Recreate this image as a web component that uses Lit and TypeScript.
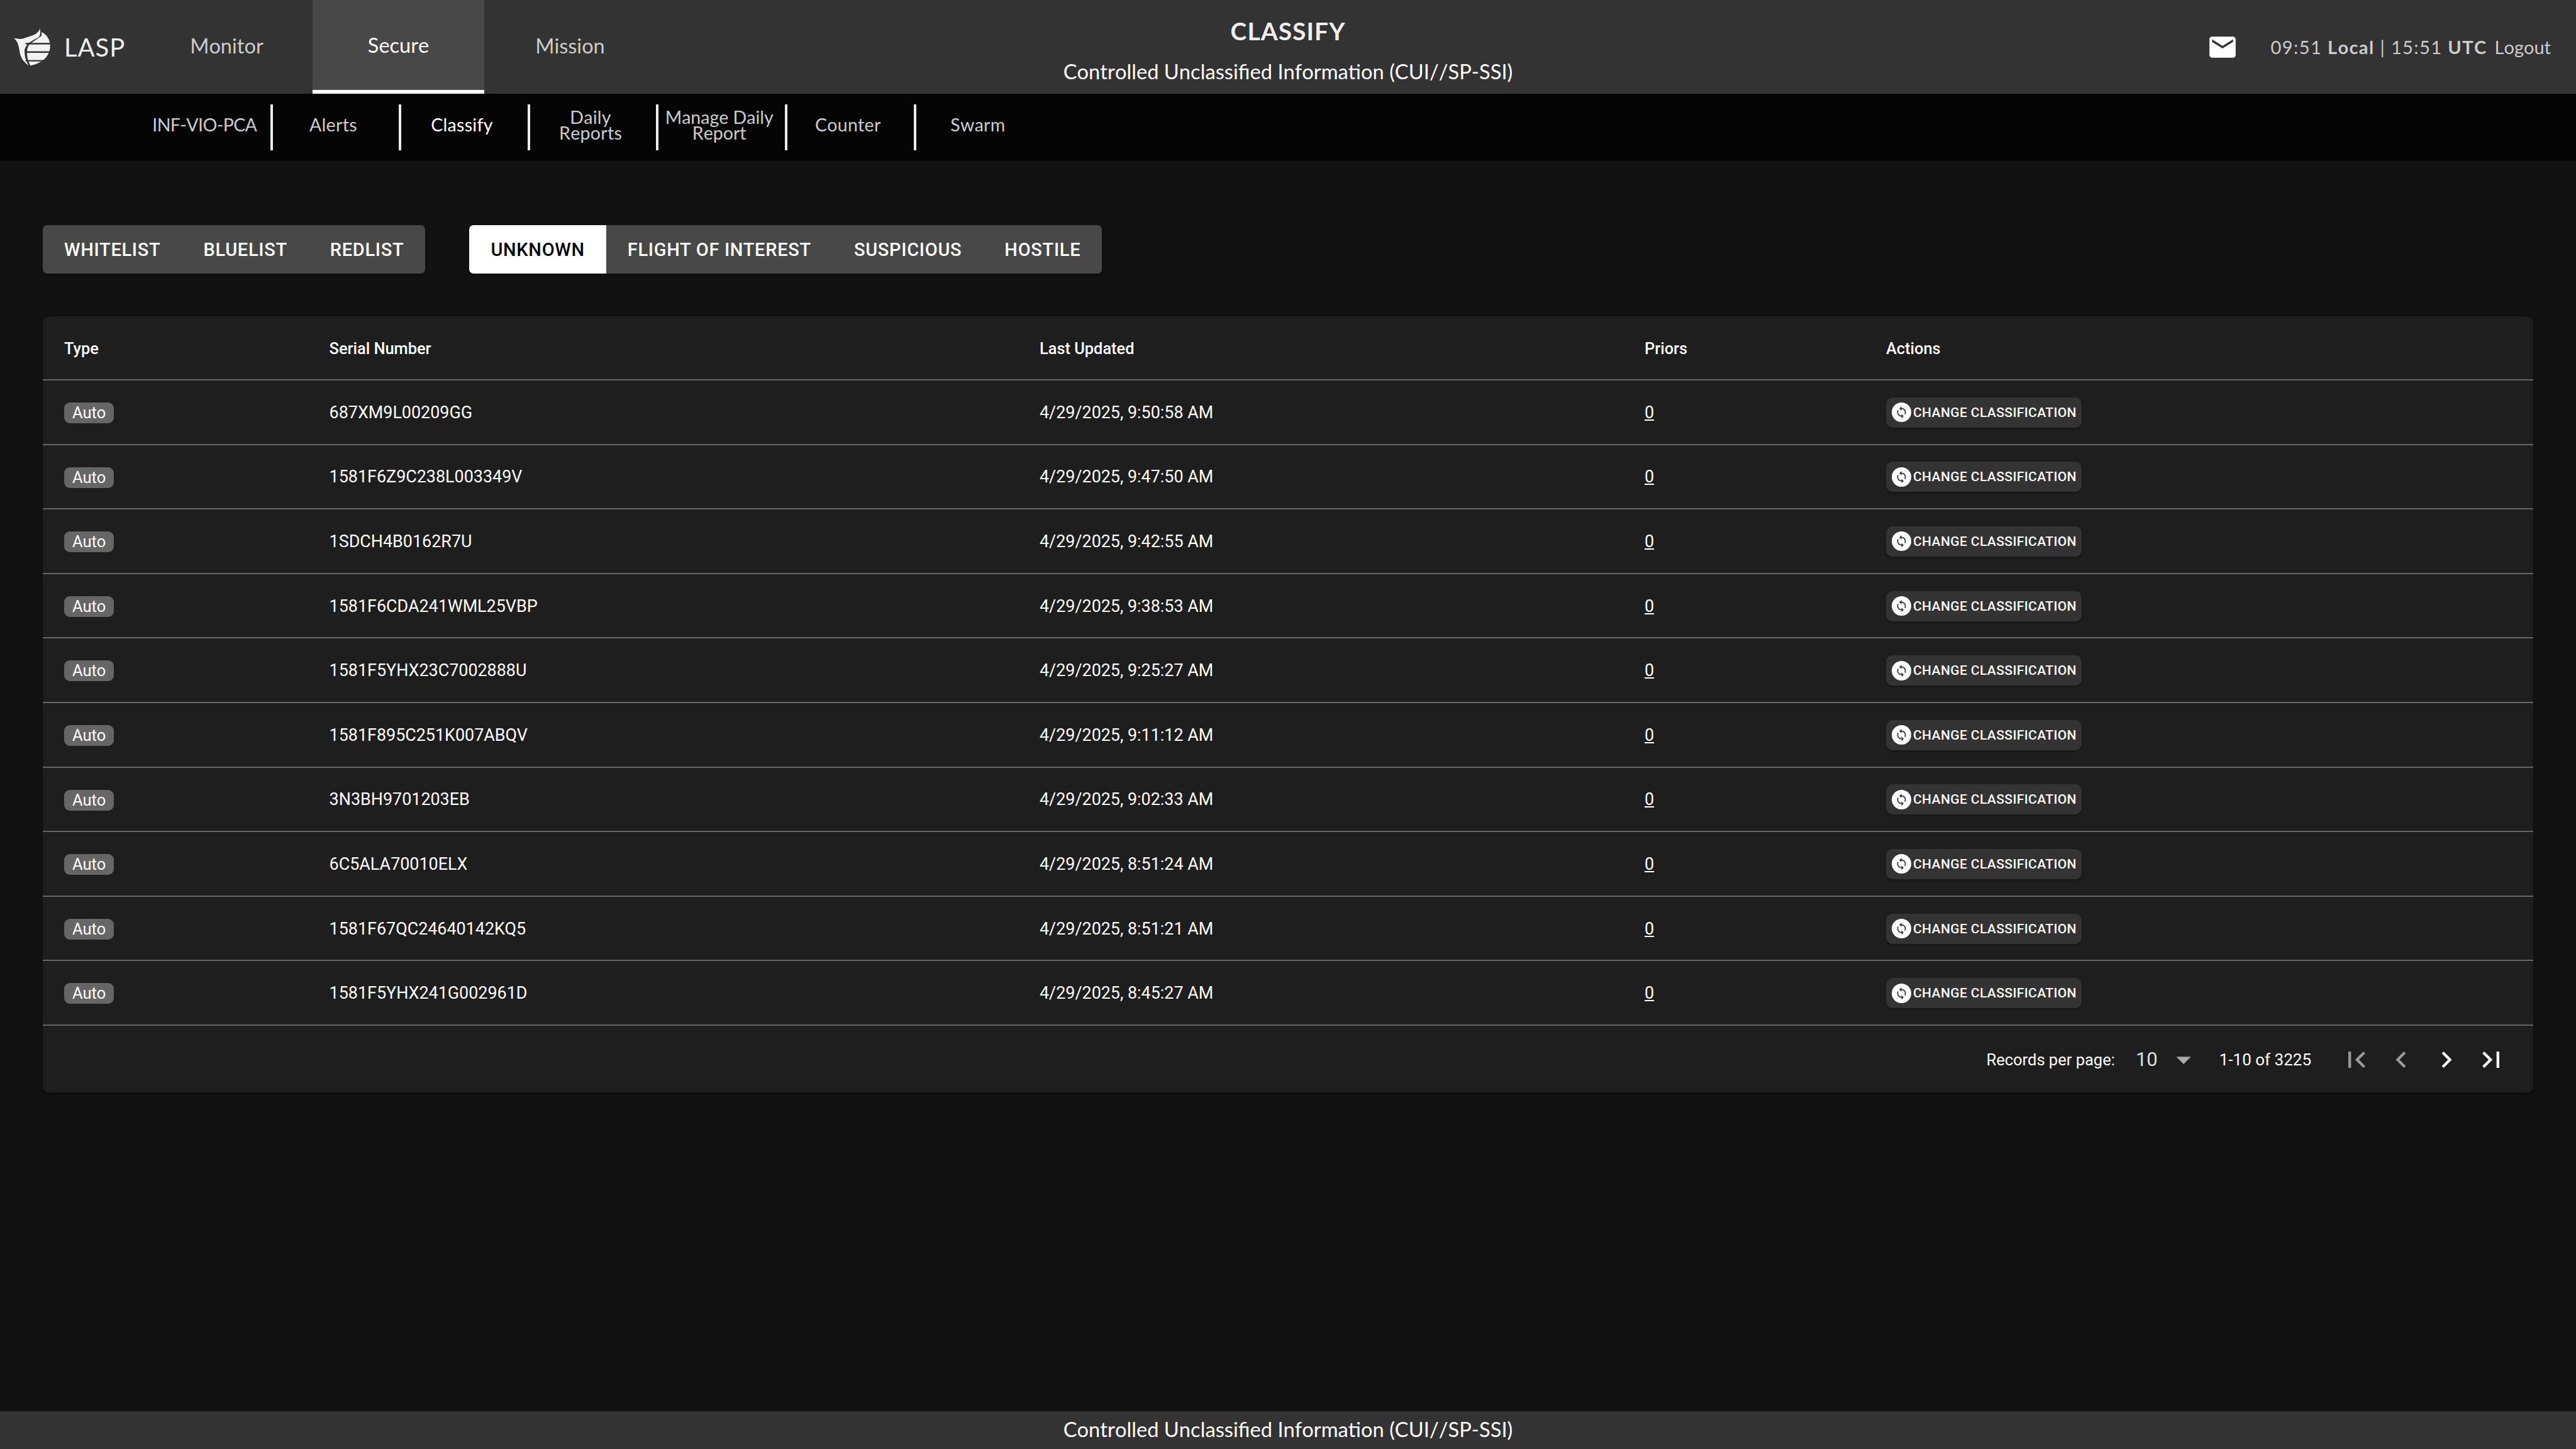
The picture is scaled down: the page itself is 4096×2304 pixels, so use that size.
import { LitElement, html, css, svg } from "lit";
import { customElement } from "lit/decorators.js";

const ROWS = [
  ["687XM9L00209GG", "4/29/2025, 9:50:58 AM"],
  ["1581F6Z9C238L003349V", "4/29/2025, 9:47:50 AM"],
  ["1SDCH4B0162R7U", "4/29/2025, 9:42:55 AM"],
  ["1581F6CDA241WML25VBP", "4/29/2025, 9:38:53 AM"],
  ["1581F5YHX23C7002888U", "4/29/2025, 9:25:27 AM"],
  ["1581F895C251K007ABQV", "4/29/2025, 9:11:12 AM"],
  ["3N3BH9701203EB", "4/29/2025, 9:02:33 AM"],
  ["6C5ALA70010ELX", "4/29/2025, 8:51:24 AM"],
  ["1581F67QC24640142KQ5", "4/29/2025, 8:51:21 AM"],
  ["1581F5YHX241G002961D", "4/29/2025, 8:45:27 AM"],
];

const icon = (d: string, cls: string) =>
  html`<svg class=${cls} viewBox="0 0 24 24"><path d=${d}></path></svg>`;

const SYNC =
  "M12,18A6,6 0 0,1 6,12C6,11 6.25,10.03 6.7,9.2L5.24,7.74C4.46,8.97 4,10.43 4,12A8,8 0 0,0 12,20V23L16,19L12,15M12,4V1L8,5L12,9V6A6,6 0 0,1 18,12C18,13 17.75,13.97 17.3,14.8L18.76,16.26C19.54,15.03 20,13.57 20,12A8,8 0 0,0 12,4Z";

@customElement("app-root")
export class AppRoot extends LitElement {
  static styles = css`
    :host {
      display: flex;
      flex-direction: column;
      min-height: 2304px;
      background: #121212;
      color: #fff;
      font-family: Roboto, "Liberation Sans", sans-serif;
    }
    .top {
      height: 149px;
      background: #333;
      display: grid;
      grid-template-columns: 1fr auto 1fr;
      font-family: Lato, "Noto Sans", sans-serif;
      font-kerning: none;
    }
    .left { display: flex; }
    .brand { width: 224px; display: flex; align-items: center; padding-left: 20px; box-sizing: border-box; gap: 20px; font-size: 40px; letter-spacing: 1px; color: #eee; }
    .logo { width: 62px; height: 62px; }
    .tab {
      width: 273px; display: flex; align-items: center; justify-content: center;
      font-size: 32.5px; color: #ccc; box-sizing: border-box; padding-bottom: 4px;
    }
    .tab.on { background: #484848; color: #fff; border-bottom: 6px solid #fff; padding-bottom: 0; }
    .center { text-align: center; display: flex; flex-direction: column; align-items: center; }
    .title { font-size: 39px; font-weight: 700; letter-spacing: 1px; color: #eee; line-height: 50px; margin-top: 24px; }
    .cui { font-size: 32.7px; line-height: 44px; margin-top: 18px; }
    .right { display: flex; align-items: center; justify-content: flex-end; padding-right: 40px; font-size: 29px; color: #ccc; }
    .mail { width: 50px; height: 50px; fill: #fff; margin-right: 52px; }
    .clock { letter-spacing: 1.4px; }
    .clock b { font-weight: 700; }
    .logout { margin-left: 12px; }
    .sub {
      height: 107px; box-sizing: border-box; background: #050505;
      display: flex; padding: 17px 0 17px 229px;
      font-family: Lato, "Noto Sans", sans-serif;
      font-kerning: none;
    }
    .si {
      width: 204.6px; box-sizing: border-box; display: flex; align-items: center; justify-content: center;
      text-align: center; font-size: 28.5px; letter-spacing: .3px; line-height: 25px; color: #ccc; border-right: 4px solid #eee;
      padding: 0 8px 8px 0;
    }
    .si:last-child { border-right: none; }
    .si.on { color: #fff; }
    .si.tight { letter-spacing: -.6px; }
    .si.snug { letter-spacing: 0; }
    .main { flex: 1; padding: 102px 68px 0; box-sizing: border-box; }
    .groups { display: flex; gap: 70px; margin-bottom: 68px; }
    .group { display: flex; height: 77px; background: #484848; border-radius: 7px; overflow: hidden; box-shadow: 0 3px 4px rgba(0,0,0,.3); }
    .gb { display: flex; align-items: center; padding: 0 34px; font-size: 29px; font-weight: 500; letter-spacing: .7px; color: #fff; }
    .gb.on { background: #fff; color: #000; }
    .table { background: #1e1e1e; border-radius: 10px; height: 1234px; box-shadow: 0 3px 4px rgba(0,0,0,.3); }
    .row {
      display: grid; grid-template-columns: 421.6px 1129.4px 962px 384px 1fr;
      height: 102.6px; box-sizing: border-box; border-bottom: 2px solid #666; align-items: center;
      font-size: 26.9px;
    }
    .row.head { height: 102px; font-weight: 500; font-size: 25.4px; }
    .row > div { padding-left: 34px; padding-top: 1px; }
    .chip { display: inline-block; background: #666; border-radius: 9px; height: 33px; line-height: 33px; padding: 0 13px; font-size: 25.5px; vertical-align: middle; }
    .u { text-decoration: underline; }
    .act {
      display: inline-flex; align-items: center; height: 48px; border-radius: 10px; background: #333;
      padding: 0 8px 0 9px; font-size: 21px; font-weight: 500; letter-spacing: .4px;
      box-shadow: 0 2px 3px rgba(0,0,0,.3); gap: 3px; vertical-align: middle;
    }
    .sync { width: 31px; height: 31px; border-radius: 50%; background: #fff; fill: #333; padding: 5px; box-sizing: border-box; }
    .pager { height: 104px; display: flex; align-items: center; justify-content: flex-end; padding: 4px 31px 0 0; box-sizing: border-box; font-size: 26px; }
    .rec { font-size: 25.5px; }
    .num { font-size: 31px; margin-left: 33px; color: #ddd; }
    .caret { width: 56px; height: 56px; fill: #aaa; margin-left: 13px; }
    .range { margin: 0 36px 0 29px; }
    .pb { width: 71.5px; display: flex; justify-content: center; }
    .pi { width: 52px; height: 52px; fill: #fff; }
    .pi.off { fill: #999; }
    .foot { height: 60px; padding-bottom: 3px; box-sizing: border-box; background: #333; display: flex; align-items: center; justify-content: center; font-family: Lato, "Noto Sans", sans-serif; font-kerning: none; font-size: 32.7px; }
  `;

  render() {
    const logo = svg`
      <path fill="#f2f2f2" d="M65 112C95 118 105 118 120 112C160 100 185 95 197 65C200 85 200 95 190 108C160 125 130 135 120 170C118 200 128 230 142 250C120 235 105 220 97 190C92 160 90 130 65 112Z"/>
      <path fill="#f2f2f2" d="M205 82C230 92 248 120 248 150C248 195 220 235 150 250C135 225 128 195 135 160C145 135 175 125 205 100Z"/>
      <g fill="#333"><rect x="125" y="136" width="130" height="8"/><rect x="125" y="178" width="130" height="8"/><rect x="125" y="222" width="130" height="7"/></g>`;
    return html`
      <header class="top">
        <div class="left">
          <div class="brand">
            <svg class="logo" viewBox="60 60 195 195">${logo}</svg>
            <span>LASP</span>
          </div>
          <div class="tab">Monitor</div>
          <div class="tab on">Secure</div>
          <div class="tab">Mission</div>
        </div>
        <div class="center">
          <div class="title">CLASSIFY</div>
          <div class="cui">Controlled Unclassified Information (CUI//SP-SSI)</div>
        </div>
        <div class="right">
          ${icon("M20,8L12,13L4,8V6L12,11L20,6M20,4H4C2.89,4 2,4.89 2,6V18A2,2 0 0,0 4,20H20A2,2 0 0,0 22,18V6C22,4.89 21.1,4 20,4Z", "mail")}
          <span class="clock">09:51 <b>Local</b> | 15:51 <b>UTC</b></span>
          <span class="logout">Logout</span>
        </div>
      </header>
      <nav class="sub">
        <div class="si tight">INF-VIO-PCA</div>
        <div class="si">Alerts</div>
        <div class="si on">Classify</div>
        <div class="si">Daily<br />Reports</div>
        <div class="si snug">Manage Daily<br />Report</div>
        <div class="si">Counter</div>
        <div class="si">Swarm</div>
      </nav>
      <main class="main">
        <div class="groups">
          <div class="group">
            <div class="gb">WHITELIST</div><div class="gb">BLUELIST</div><div class="gb">REDLIST</div>
          </div>
          <div class="group">
            <div class="gb on">UNKNOWN</div><div class="gb">FLIGHT OF INTEREST</div><div class="gb">SUSPICIOUS</div><div class="gb">HOSTILE</div>
          </div>
        </div>
        <section class="table">
          <div class="row head">
            <div>Type</div><div>Serial Number</div><div>Last Updated</div><div>Priors</div><div>Actions</div>
          </div>
          ${ROWS.map(
            ([serial, date]) => html`<div class="row">
              <div><span class="chip">Auto</span></div>
              <div>${serial}</div>
              <div>${date}</div>
              <div><span class="u">0</span></div>
              <div><span class="act">${icon(SYNC, "sync")}CHANGE CLASSIFICATION</span></div>
            </div>`
          )}
          <div class="pager">
            <span class="rec">Records per page:</span>
            <span class="num">10</span>
            ${icon("M7,10L12,15L17,10H7Z", "caret")}
            <span class="range">1-10 of 3225</span>
            <div class="pb">${icon("M18.41,16.59L13.82,12L18.41,7.41L17,6L11,12L17,18L18.41,16.59M6,6H8V18H6V6Z", "pi off")}</div>
            <div class="pb">${icon("M15.41,16.58L10.83,12L15.41,7.41L14,6L8,12L14,18L15.41,16.58Z", "pi off")}</div>
            <div class="pb">${icon("M8.59,16.58L13.17,12L8.59,7.41L10,6L16,12L10,18L8.59,16.58Z", "pi")}</div>
            <div class="pb">${icon("M5.59,7.41L10.18,12L5.59,16.59L7,18L13,12L7,6L5.59,7.41M16,6H18V18H16V6Z", "pi")}</div>
          </div>
        </section>
      </main>
      <footer class="foot">Controlled Unclassified Information (CUI//SP-SSI)</footer>
    `;
  }
}
